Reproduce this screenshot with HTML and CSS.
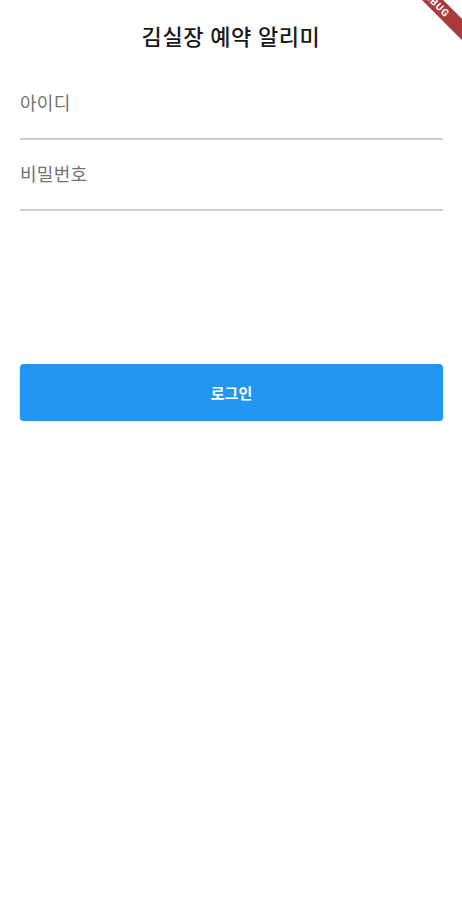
FILE: index.html
```html
<!DOCTYPE html>
<html lang="ko">
<head>
  <meta charset="UTF-8">
  <meta name="viewport" content="width=device-width, initial-scale=1.0">
  <title>김실장 예약 알리미</title>
  <link rel="stylesheet" href="styles.css">
</head>

<body>

  <div class="debug-banner">DEBUG</div>

  <header class="appbar">
    <h1>김실장 예약 알리미</h1>
  </header>

  <div class="container">
    <form id="login-form">
      <label class="field">
        <input type="text" id="userid" placeholder="아이디">
      </label>
      <label class="field">
        <input type="password" id="password" placeholder="비밀번호">
      </label>

      <button type="submit">로그인</button>
    </form>
  </div>

</body>
</html>
```

FILE: styles.css
```css
/* General Reset */
* {
  margin: 0;
  padding: 0;
  box-sizing: border-box;
}

body {
  font-family: Roboto, 'Noto Sans CJK KR', sans-serif;
  background: #fff;
  color: #212121;
  overflow: hidden;
}

/* Debug ribbon in the corner, mostly off screen */
.debug-banner {
  position: absolute;
  top: -5px;
  right: -23px;
  width: 100px;
  transform: rotate(45deg);
  background: #a93b3b;
  color: #fff;
  font-size: 10px;
  font-weight: 700;
  text-align: center;
  line-height: 15px;
  letter-spacing: 1px;
}

/* Title bar */
.appbar {
  height: 69px;
  display: flex;
  align-items: center;
  justify-content: center;
}

.appbar h1 {
  font-size: 22px;
  font-weight: 500;
  letter-spacing: 0.6px;
  color: #1a1a1a;
}

.container {
  padding: 0 19px 0 20px;
}

form {
  display: flex;
  flex-direction: column;
}

.field {
  display: block;
  border-bottom: 2px solid #cfcfcf;
}

.field input {
  width: 100%;
  border: none;
  outline: none;
  background: transparent;
  font-family: inherit;
  font-size: 18px;
  letter-spacing: 0.3px;
  color: #333;
  padding: 22px 0 22px;
  height: 69px;
}

.field input::placeholder {
  color: #737373;
}

button {
  margin-top: 153px;
  height: 57px;
  background-color: #2196f3;
  color: white;
  border: none;
  border-radius: 4px;
  font-family: inherit;
  font-size: 15px;
  font-weight: 700;
  box-shadow: 0 2px 3px rgba(0, 0, 0, 0.22);
  cursor: pointer;
}
```
